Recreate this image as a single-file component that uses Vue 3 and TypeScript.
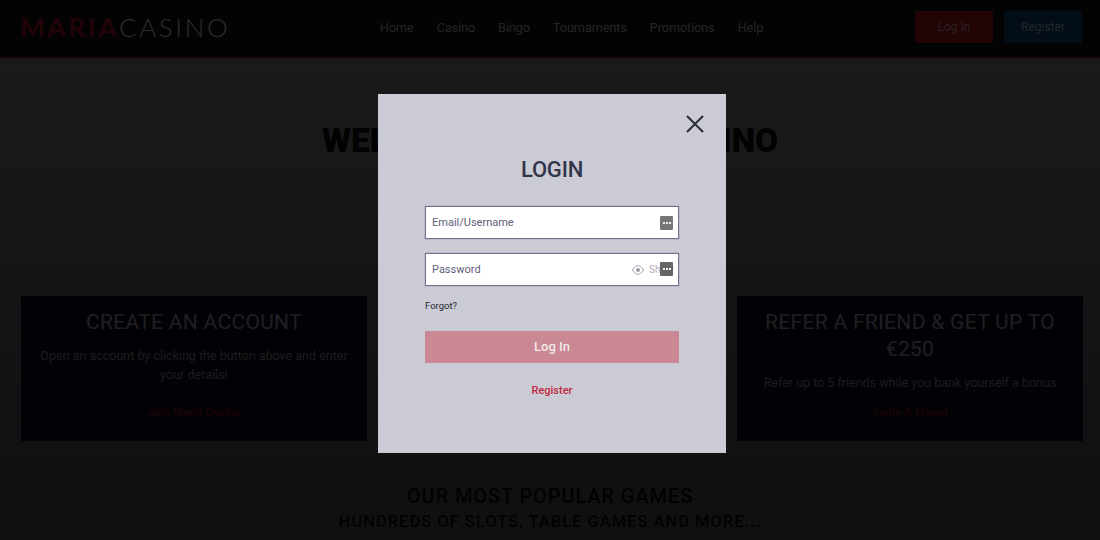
<template>
  <div class="page">
    <header class="top-bar">
      <div class="logo"><b>MARIA</b><span>CASINO</span></div>
      <nav class="main-nav">
        <a v-for="item in navItems" :key="item">{{ item }}</a>
      </nav>
      <div class="top-actions">
        <button class="top-btn login">Log In</button>
        <button class="top-btn register">Register</button>
      </div>
    </header>

    <section class="hero">
      <h1>WELCOME TO MARIA CASINO</h1>
      <div class="hero-stripe"></div>
    </section>

    <section class="cards">
      <div class="card" v-for="card in cards" :key="card.title">
        <h2>{{ card.title }}</h2>
        <p>{{ card.text }}</p>
        <a>{{ card.link }}</a>
      </div>
    </section>

    <section class="games">
      <h3>OUR MOST POPULAR GAMES</h3>
      <h4>HUNDREDS OF SLOTS, TABLE GAMES AND MORE...</h4>
    </section>

    <!--dim layer + login modal-->
    <div class="overlay"></div>
    <div class="modal">
      <button class="close" aria-label="Close">
        <svg width="18" height="18" viewBox="0 0 18 18">
          <path d="M1 1L17 17M17 1L1 17" stroke="#2b2d3a" stroke-width="2" fill="none" />
        </svg>
      </button>
      <h2 class="modal-title">LOGIN</h2>
      <div class="field">
        <span class="placeholder">Email/Username</span>
        <span class="key-badge"><i></i><i></i><i></i></span>
      </div>
      <div class="field">
        <span class="placeholder">Password</span>
        <svg class="eye" width="12" height="10" viewBox="0 0 24 20">
          <path d="M1 10C5 3 9 1.500 12 1.500S19 3 23 10C19 17 15 18.500 12 18.500S5 17 1 10Z" fill="none" stroke="#9a9aa6" stroke-width="2" />
          <circle cx="12" cy="10" r="4" fill="#9a9aa6" />
        </svg>
        <span class="show">Show</span>
        <span class="key-badge over"><i></i><i></i><i></i></span>
      </div>
      <a class="forgot">Forgot?</a>
      <button class="submit">Log In</button>
      <a class="register-link">Register</a>
    </div>
  </div>
</template>

<script setup lang="ts">
const navItems = ["Home", "Casino", "Bingo", "Tournaments", "Promotions", "Help"];

const cards = [
  {
    title: "CREATE AN ACCOUNT",
    text: "Open an account by clicking the button above and enter your details!",
    link: "Join Maria Casino",
  },
  {
    title: "CLAIM YOUR BONUS",
    text: "Make your first deposit and claim your welcome bonus",
    link: "Deposit",
  },
  {
    title: "REFER A FRIEND & GET UP TO €250",
    text: "Refer up to 5 friends while you bank yourself a bonus",
    link: "Invite A Friend",
  },
];
</script>

<style>
html,
body {
  margin: 0;
  background: #55555f;
}
</style>

<style scoped>
.page {
  position: relative;
  width: 1100px;
  height: 540px;
  overflow: hidden;
  background: linear-gradient(#828287 10%, #6c6c74 50%, #50505a 90%);
  font-family: Roboto, "Liberation Sans", sans-serif;
}

.top-bar {
  height: 58px;
  box-sizing: border-box;
  display: flex;
  align-items: center;
  padding: 0 18px 2px 20px;
  background: #101014;
  border-bottom: 2px solid #4a1018;
}

.logo {
  width: 360px;
  font-family: Lato, "Liberation Sans", sans-serif;
  font-size: 26px;
  letter-spacing: 2.600px;
  color: #d4d4dc;
}
.logo b {
  color: #a0121f;
  font-weight: 900;
}
.logo span {
  font-weight: 300;
}

.main-nav {
  display: flex;
  gap: 23px;
  flex: 1;
  font-size: 12.500px;
  color: #b4b4bc;
}

.top-actions {
  display: flex;
  gap: 11px;
}
.top-btn {
  width: 78px;
  height: 32px;
  border: 0;
  font: 12px Roboto, sans-serif;
}
.top-btn.login {
  background: #a81020;
  color: #d0a8a8;
}
.top-btn.register {
  background: #0f4478;
  color: #b0b8c8;
}

.hero {
  height: 238px;
  display: flex;
  flex-direction: column;
  text-align: center;
}
.hero h1 {
  margin: 0;
  padding-top: 63px;
  font-size: 33.500px;
  font-weight: 900;
  color: #0a0a0c;
}
.hero-stripe {
  height: 14px;
  margin-top: auto;
  margin-bottom: 36px;
  background: repeating-linear-gradient(90deg, rgba(170, 40, 50, 0.09) 0 42px, transparent 42px 96px);
}

.cards {
  display: grid;
  grid-template-columns: repeat(3, 346px);
  gap: 12px;
  padding-left: 21px;
}
.card {
  height: 145px;
  box-sizing: border-box;
  padding: 13px 18px 22px;
  display: flex;
  flex-direction: column;
  align-items: center;
  text-align: center;
  background: #0c0c1e;
}
.card h2 {
  margin: 0 0 10px;
  font-size: 21px;
  line-height: 27px;
  font-weight: 400;
  letter-spacing: 0.300px;
  color: #9a9aa8;
}
.card p {
  margin: 0;
  font-size: 12.500px;
  line-height: 19px;
  color: #85858f;
}
.card a {
  margin-top: auto;
  font-size: 11.500px;
  font-weight: 700;
  color: #701420;
}

.games {
  padding-top: 43px;
  text-align: center;
  color: #0a0a0c;
}
.games h3 {
  margin: 0;
  font-size: 20px;
  line-height: 24px;
  font-weight: 500;
  letter-spacing: 0.900px;
}
.games h4 {
  margin: 3px 0 0;
  font-size: 16.500px;
  line-height: 22px;
  font-weight: 500;
  letter-spacing: 1px;
}

.overlay {
  position: absolute;
  inset: 0;
  background: rgba(0, 0, 0, 0.8);
}

.modal {
  position: absolute;
  left: 378px;
  top: 94px;
  width: 348px;
  height: 359px;
  box-sizing: border-box;
  padding: 0 47px;
  display: flex;
  flex-direction: column;
  background: #cbcbd5;
}

.close {
  position: absolute;
  top: 21px;
  right: 22px;
  width: 18px;
  height: 18px;
  padding: 0;
  border: 0;
  background: none;
}

.modal-title {
  margin: 63px 0 23px;
  height: 26px;
  line-height: 26px;
  text-align: center;
  font-size: 22px;
  font-weight: 500;
  letter-spacing: -0.200px;
  color: #33354a;
}

.field {
  position: relative;
  height: 33px;
  box-sizing: border-box;
  margin-bottom: 14px;
  padding: 0 5px 0 6px;
  display: flex;
  align-items: center;
  background: #fff;
  border: 1px solid #73738f;
  box-shadow: 0 0 1px #73738f;
}
.placeholder {
  flex: 1;
  font-size: 11px;
  color: #5e5e78;
}
.eye {
  margin-right: 5px;
}
.show {
  width: 24px;
  font-size: 10px;
  white-space: nowrap;
  color: #b0b0b6;
}
.key-badge {
  width: 13px;
  height: 14px;
  display: flex;
  align-items: center;
  justify-content: center;
  gap: 1px;
  border-radius: 1px;
  background: #777;
}
.key-badge.over {
  position: absolute;
  right: 5px;
  top: 8px;
  background: #666;
}
.key-badge i {
  width: 2px;
  height: 2px;
  background: #eee;
}

.forgot {
  font-size: 9.500px;
  line-height: 12px;
  color: #26262e;
}

.submit {
  height: 32px;
  margin-top: 19px;
  padding: 0 0 2px;
  border: 0;
  background: #c98893;
  color: #f3e9ea;
  font: 500 13px Roboto, sans-serif;
}

.register-link {
  margin-top: 21px;
  text-align: center;
  font-size: 11px;
  font-weight: 500;
  color: #c22a40;
}
</style>
